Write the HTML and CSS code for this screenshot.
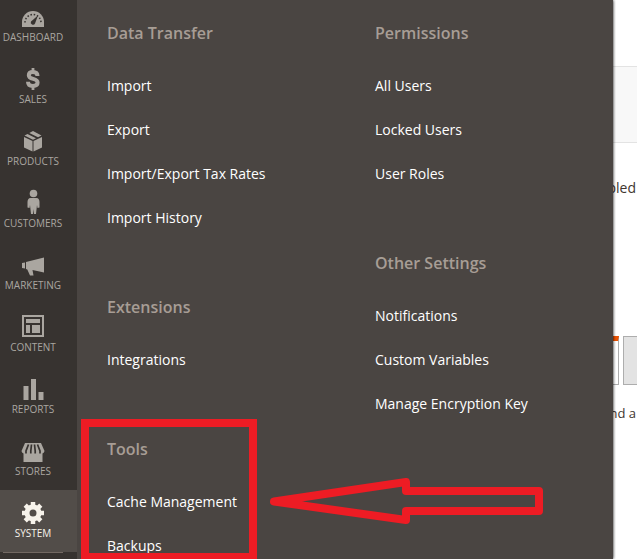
FILE: index.html
```html
<!DOCTYPE html>
<html lang="en">
<head>
	<meta charset="UTF-8">
	<title>System / Magento Admin</title>
	<meta name="viewport" content="width=device-width, initial-scale=1.0">
	<link rel="stylesheet" href="styles.css">
</head>
<body>
	<!-- Main menu -->
	<nav class="menu" aria-label="Main menu">
		<a class="menu-item menu-item-first" href="#">
			<svg class="icon" viewBox="0 0 24 24"><path fill="currentColor" d="M1 22v-5a11 11 0 0 1 22 0v5z"/><path fill="none" stroke="#373330" stroke-width="1.600" stroke-dasharray="1.500 1.800" d="M4 17.500a8 8 0 0 1 16 0"/><path fill="#373330" d="M17 10.500l-3 8a2.200 2.200 0 1 1-4-2z"/></svg>
			<span>Dashboard</span>
		</a>
		<a class="menu-item" href="#">
			<svg class="icon" viewBox="0 0 24 24"><path fill="none" stroke="currentColor" stroke-width="4" d="M16.500 9C16.500 6.300 14.500 5 12 5S7.800 6 7.800 8.200c0 5 8.800 2.300 8.800 7.400 0 2.400-2 3.400-4.600 3.400s-5-1-5-4.200"/><path fill="none" stroke="currentColor" stroke-width="2.800" d="M12 1v5M12 18v5"/></svg>
			<span>Sales</span>
		</a>
		<a class="menu-item" href="#">
			<svg class="icon" viewBox="0 0 24 24"><path fill="currentColor" d="M3 8l8.500 4v10.500L3 18.500zM21 8l-8.500 4v10.500l8.500-4zM3.500 6.500L6.500 5l8.500 4.200-3 1.500zM8.300 4L12 2l8.500 4.500L17 8.200z"/></svg>
			<span>Products</span>
		</a>
		<a class="menu-item" href="#">
			<svg class="icon" viewBox="0 0 24 24"><circle cx="12.500" cy="2.500" r="3.800" fill="currentColor"/><path fill="currentColor" d="M9.500 7h6c2 0 3 2 3 4v5.500l-2 .5-.5-3-1 9h-2l-.5-5-.5 5h-2l-1-9-.5 3-2-.5V11c0-2 1-4 3-4z"/></svg>
			<span>Customers</span>
		</a>
		<a class="menu-item" href="#">
			<svg class="icon" viewBox="0 0 24 24"><path fill="currentColor" d="M1 10l3-.5v6L1 15zM5 9l18-4.500v15L11.500 17l1 5.500H9l-2.700-6L5 16z"/></svg>
			<span>Marketing</span>
		</a>
		<a class="menu-item" href="#">
			<svg class="icon" viewBox="0 0 24 24"><path fill="currentColor" fill-rule="evenodd" d="M1 0h22v22H1zM3 2v18h18V2z"/><path fill="currentColor" d="M5 4h14v4H5zM5 10h4v8H5zM11 10h8v8h-8z"/></svg>
			<span>Content</span>
		</a>
		<a class="menu-item" href="#">
			<svg class="icon" viewBox="0 0 24 24"><path fill="currentColor" d="M2.500 9h5v14h-5zM10 2h5v21h-5zM17.500 15h5v8h-5z"/></svg>
			<span>Reports</span>
		</a>
		<a class="menu-item" href="#">
			<svg class="icon" viewBox="0 0 24 24"><path fill="currentColor" d="M4 4h16l3.500 8a3 3 0 0 1-2 2.500V23h-19v-8.500a3 3 0 0 1-2-2.500z"/><path fill="none" stroke="#373330" stroke-width="1.700" d="M7.500 5.500L5 12v2.500M10.500 5.500L9.800 12v2.500M13.500 5.500l.7 6.500v2.500M16.500 5.500L19 12v2.500"/></svg>
			<span>Stores</span>
		</a>
		<a class="menu-item menu-item-active" href="#" aria-current="page">
			<svg class="icon" viewBox="0 0 24 24"><circle cx="12" cy="12" r="6" fill="none" stroke="currentColor" stroke-width="5"/><path fill="none" stroke="currentColor" stroke-width="4.500" d="M12 1v5M12 18v5M1 12h5M18 12h5M4.200 4.200l3.500 3.500M16.300 16.300l3.500 3.500M19.800 4.200l-3.500 3.500M7.700 16.300l-3.500 3.500"/></svg>
			<span>System</span>
		</a>
		<hr class="menu-line">
	</nav>

	<!-- System submenu -->
	<div class="submenu">
		<div class="submenu-column">
			<section class="group">
				<h2 class="group-title">Data Transfer</h2>
				<a class="group-link" href="#">Import</a>
				<a class="group-link" href="#">Export</a>
				<a class="group-link" href="#">Import/Export Tax Rates</a>
				<a class="group-link" href="#">Import History</a>
			</section>
			<section class="group">
				<h2 class="group-title">Extensions</h2>
				<a class="group-link" href="#">Integrations</a>
			</section>
			<section class="group">
				<h2 class="group-title">Tools</h2>
				<a class="group-link" href="#">Cache Management</a>
				<a class="group-link" href="#">Backups</a>
			</section>
		</div>
		<div class="submenu-column">
			<section class="group">
				<h2 class="group-title">Permissions</h2>
				<a class="group-link" href="#">All Users</a>
				<a class="group-link" href="#">Locked Users</a>
				<a class="group-link" href="#">User Roles</a>
			</section>
			<section class="group">
				<h2 class="group-title">Other Settings</h2>
				<a class="group-link" href="#">Notifications</a>
				<a class="group-link" href="#">Custom Variables</a>
				<a class="group-link" href="#">Manage Encryption Key</a>
			</section>
		</div>
	</div>

	<!-- Page behind the submenu -->
	<main class="page">
		<div class="page-bar"></div>
		<p class="page-text">bled</p>
		<div class="page-tabs">
			<div class="tab-current"></div>
			<div class="tab"></div>
		</div>
		<p class="page-note">nd a</p>
	</main>

	<!-- Highlight box and arrow -->
	<svg class="marks" width="637" height="559" viewBox="0 0 637 559" aria-hidden="true">
		<path fill="none" stroke="#ed1c24" stroke-width="8" d="M85 423h168v134H85z"/>
		<path fill="none" stroke="#ed1c24" stroke-width="8" stroke-linejoin="round" d="M274 501.500L406 482v9h133v20H406v9z"/>
	</svg>
</body>
</html>
```
FILE: styles.css
```css
* {
	box-sizing: border-box;
}

body {
	display: flex;
	height: 100vh;
	margin: 0;
	overflow: hidden;
	position: relative;
	background: #ffffff;
	color: #41362f;
	font-family: "Open Sans", "Noto Sans", sans-serif;
	font-size: 14px;
}

a {
	text-decoration: none;
}

/* Main menu */
.menu {
	flex: 0 0 77px;
	background: #373330;
}

.menu-item {
	display: flex;
	flex-direction: column;
	align-items: center;
	height: 62px;
	padding: 11px 11px 0 0;
	color: #aaa6a0;
	font-size: 10px;
	line-height: 14px;
	text-transform: uppercase;
}

.menu-item-first {
	height: 56px;
	padding-top: 5px;
}

.menu-item-active {
	background: #524d49;
	color: #f7f3eb;
}

.icon {
	width: 24px;
	height: 24px;
	margin-bottom: 1px;
	overflow: visible;
}

.menu-line {
	width: 60px;
	margin: 0 0 0 3px;
	border: 0;
	border-top: 1px solid #736963;
}

/* Submenu */
.submenu {
	flex: 1;
	display: grid;
	grid-template-columns: 1fr 1fr;
	z-index: 1;
	padding-top: 23px;
	background: #4a4542;
	box-shadow: 0 0 3px #000000;
	clip-path: inset(0 -3px 0 0);
}

.submenu-column {
	padding-left: 30px;
}

.group {
	margin-bottom: 57px;
}

.group:last-child {
	margin-bottom: 0;
}

.group-title {
	margin: 0 0 21px;
	color: #a79d95;
	font-size: 16px;
	font-weight: 600;
	line-height: 20px;
}

.group-link {
	display: block;
	color: #ffffff;
	line-height: 44px;
}

/* Page */
.page {
	flex: 0 0 24px;
	min-width: 0;
}

.page-bar {
	height: 77px;
	margin-top: 66px;
	border-top: 1px solid #e3e3e3;
	border-bottom: 1px solid #e3e3e3;
	background: #f8f8f8;
}

.page-text,
.page-note {
	display: flex;
	justify-content: flex-end;
	margin: 0;
	padding-right: 1px;
	line-height: 20px;
	white-space: nowrap;
}

.page-text {
	margin-top: 35px;
}

.page-tabs {
	display: flex;
	height: 49px;
	margin: 138px 0 18px;
}

.tab-current {
	width: 6px;
	border-top: 5px solid #eb5202;
	border-right: 1px solid #adadad;
	border-bottom: 1px solid #adadad;
}

.tab {
	flex: 1;
	margin-left: 4px;
	border: 1px solid #adadad;
	border-right: 0;
	background: #e3e3e3;
}

.page-note {
	font-size: 13px;
}

/* Drawn over the page */
.marks {
	position: absolute;
	top: 0;
	left: 0;
	z-index: 2;
}
```
